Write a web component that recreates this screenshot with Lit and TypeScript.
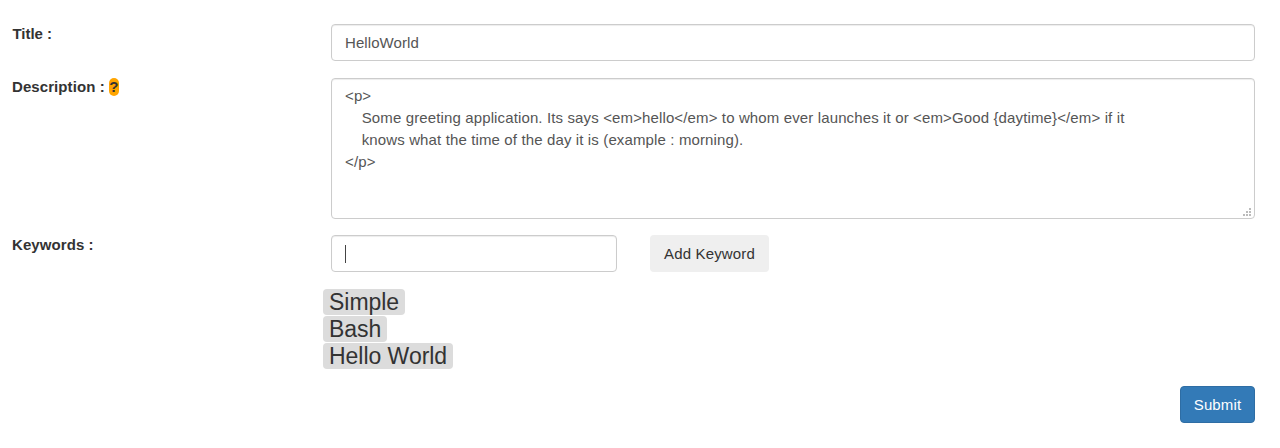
import { LitElement, html, css } from "lit";
import { customElement } from "lit/decorators.js";

const INDENT = "    ";
const DESCRIPTION = [
  { indent: "", text: "<p>" },
  { indent: INDENT, text: "Some greeting application. Its says <em>hello</em> to whom ever launches it or <em>Good {daytime}</em> if it" },
  { indent: INDENT, text: "knows what the time of the day it is (example : morning)." },
  { indent: "", text: "</p>" },
];

@customElement("app-root")
export class AppRoot extends LitElement {
  static styles = css`
    :host { display: block; height: 448px; background: #fff; color: #333; font: 15px/22px "Liberation Sans", Arial, sans-serif; overflow: hidden; }
    * { box-sizing: border-box; }
    .form { padding: 24px 25px 0 12px; display: flex; flex-direction: column; }
    .row { display: grid; grid-template-columns: 319px 1fr; align-items: start; }
    .label { font-weight: bold; line-height: 20px; letter-spacing: 0.08px; }
    .first { padding-left: 0.5px; letter-spacing: -0.05px; }
    .described { display: flex; align-items: flex-start; gap: 4px; line-height: 18px; }
    .help { background: #ffa500; border-radius: 5px; width: 10px; height: 18px; text-align: center; letter-spacing: 0; }
    .control { border: 1px solid #ccc; border-radius: 4px; padding: 7px 13px; color: #555; background: #fff; box-shadow: inset 0 1px 1px rgba(0,0,0,.075); height: 37px; line-height: 22px; letter-spacing: 0.08px; }
    .area { height: 141px; padding-top: 6px; white-space: pre; margin-bottom: 16px; display: grid; letter-spacing: 0.13px; }
    .indent { letter-spacing: 0; }
    .title { margin-bottom: 17px; }
    .grip { justify-self: end; align-self: end; margin: 0 -11px -6px 0; display: block; }
    .entry { display: flex; gap: 33px; }
    .keyword { width: 286px; }
    .caret { width: 1px; height: 18px; background: #444; margin-top: 2px; }
    .add { width: 119px; height: 37px; border-radius: 4px; background: #efefef; line-height: 37px; text-align: center; letter-spacing: 0.14px; }
    .tags { margin: 17px 0 0 311px; display: flex; flex-direction: column; align-items: start; gap: 1px; }
    .tag { height: 26px; line-height: 26px; font-size: 23px; padding: 0 6.15px 0 6px; border-radius: 4px; background: #dcdcdc; letter-spacing: -0.03px; }
    .submit { align-self: flex-end; margin-top: 17px; width: 75px; height: 37px; border: 1px solid #2e6da4; border-radius: 4px; background: #337ab7; color: #fff; line-height: 35px; text-align: center; letter-spacing: 0.14px; }
  `;

  render() {
    return html`
      <div class="form">
        <div class="row">
          <div class="label first">Title :</div>
          <div class="control title">HelloWorld</div>
        </div>
        <div class="row">
          <div class="label described"><span>Description :</span><span class="help">?</span></div>
          <div class="control area"><div>${DESCRIPTION.map((l) => html`<div><span class="indent">${l.indent}</span>${l.text}</div>`)}</div><svg class="grip" width="9" height="9" fill="#bbb"><path d="M6 0h2v2h-2zM3 3h2v2h-2zM6 3h2v2h-2zM0 6h2v2h-2zM3 6h2v2h-2zM6 6h2v2h-2z"/></svg></div>
        </div>
        <div class="row">
          <div class="label">Keywords :</div>
          <div class="entry">
            <div class="control keyword"><div class="caret"></div></div>
            <div class="add">Add Keyword</div>
          </div>
        </div>
        <div class="tags">
          ${["Simple", "Bash", "Hello World"].map((t) => html`<span class="tag">${t}</span>`)}
        </div>
        <div class="submit">Submit</div>
      </div>
    `;
  }
}
